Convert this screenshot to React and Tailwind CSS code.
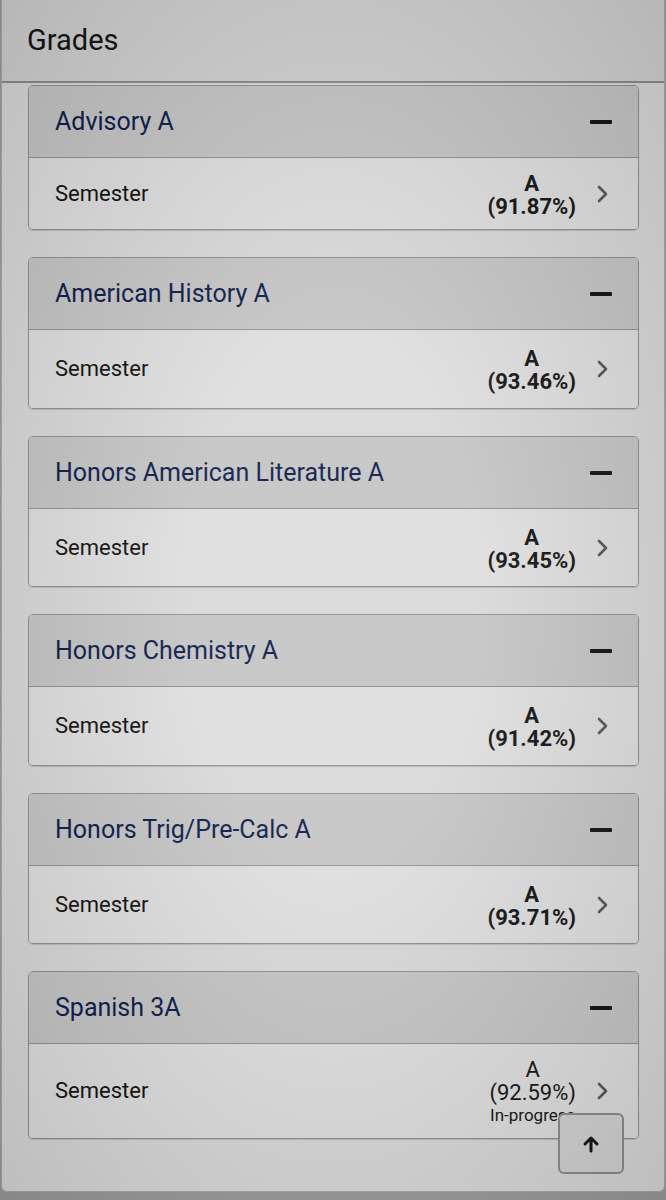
import React from "react";

const courses = [
  { name: "Advisory A", grade: "A", pct: "(91.87%)", bodyH: "h-[71px]" },
  { name: "American History A", grade: "A", pct: "(93.46%)", bodyH: "h-[78px]" },
  { name: "Honors American Literature A", grade: "A", pct: "(93.45%)", bodyH: "h-[77px]" },
  { name: "Honors Chemistry A", grade: "A", pct: "(91.42%)", bodyH: "h-[78px]" },
  { name: "Honors Trig/Pre-Calc A", grade: "A", pct: "(93.71%)", bodyH: "h-[77px]" },
];

function Chevron() {
  return (
    <svg width="14" height="20" viewBox="0 0 14 20" className="shrink-0">
      <path d="M3 3 L10 10 L3 17" fill="none" stroke="#555" strokeWidth="2.6" strokeLinecap="round" strokeLinejoin="round" />
    </svg>
  );
}

function Minus() {
  return <div className="w-[22px] h-[4px] rounded-[1px] bg-[#111]" />;
}

function Card({ name, children, bodyH }) {
  return (
    <div className="rounded-[5px] border border-[#8f8f8f] overflow-hidden shadow-[0_1px_1px_rgba(0,0,0,0.15)]">
      <div className="h-[72px] bg-[#c4c4c4] border-b border-[#8f8f8f] flex items-center justify-between pl-[26px] pr-[26px]">
        <span className="text-[25px] text-[#0a1848] leading-none">{name}</span>
        <Minus />
      </div>
      <div className={`${bodyH} bg-[#dedede] flex items-center justify-between pl-[26px] pr-[28px]`}>
        <span className="text-[22px] text-[#0d0d0d] leading-none">Semester</span>
        <div className="flex items-center gap-[20px]">{children}</div>
      </div>
    </div>
  );
}

export default function App() {
  return (
    <div className="w-[666px] h-[1200px] bg-[#9a9a9a] relative overflow-hidden" style={{ fontFamily: "Roboto, 'Noto Sans', sans-serif" }}>
      <div className="h-[1192px] mx-[1px] bg-[#d8d8d8] border-x border-b border-[#a8a8a8] rounded-b-[6px] flex flex-col">
        <div className="h-[83px] bg-[#d0d0d0] border-b-2 border-[#8a8a8a] flex items-center pl-[25px] shrink-0">
          <span className="text-[29px] text-[#111] leading-none">Grades</span>
        </div>
        <div className="pl-[26px] pr-[25px] pt-[2px] flex flex-col gap-[27px]">
          {courses.map((c) => (
            <Card key={c.name} name={c.name} bodyH={c.bodyH}>
              <div className="flex flex-col items-center text-[22px] font-bold leading-[23px] text-[#111] pt-[2px]">
                <span>{c.grade}</span>
                <span>{c.pct}</span>
              </div>
              <Chevron />
            </Card>
          ))}
          <Card name="Spanish 3A" bodyH="h-[94px]">
            <div className="flex flex-col items-center text-[#111] pt-[2px]">
              <span className="text-[22px] leading-[22px]">A</span>
              <span className="text-[22px] leading-[23px]">(92.59%)</span>
              <span className="text-[17px] leading-[22px]">In-progress</span>
            </div>
            <Chevron />
          </Card>
        </div>
      </div>
      <button className="absolute left-[558px] top-[1113px] w-[66px] h-[61px] rounded-[6px] border-2 border-[#8a8a8a] bg-[#d2d2d2] flex items-center justify-center">
        <svg width="20" height="20" viewBox="0 0 20 20">
          <path d="M10 17 V4 M4 10 L10 4 L16 10" fill="none" stroke="#111" strokeWidth="3" strokeLinecap="round" strokeLinejoin="round" />
        </svg>
      </button>
      <div className="absolute inset-0 pointer-events-none bg-[radial-gradient(ellipse_at_center,rgba(255,255,255,0.08)_30%,rgba(0,0,0,0.12)_100%)]" />
    </div>
  );
}
